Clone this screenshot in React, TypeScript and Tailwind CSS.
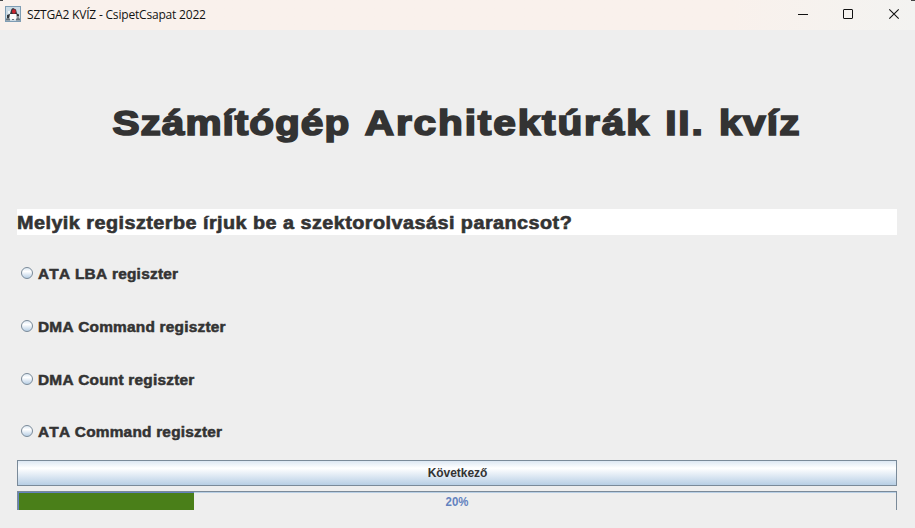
const answers = [
  { label: 'ATA LBA regiszter', height: 'h-[53px]', spacing: 'tracking-[0.23px]' },
  { label: 'DMA Command regiszter', height: 'h-[53px]', spacing: 'tracking-[0.2px]' },
  { label: 'DMA Count regiszter', height: 'h-[52px]', spacing: 'tracking-[0.2px]' },
  { label: 'ATA Command regiszter', height: 'h-[34px]', spacing: 'tracking-[0.2px]' },
];

function DukeIcon() {
  return (
    <svg width="16" height="16" viewBox="0 0 16 16">
      <rect x="0.5" y="0.5" width="15" height="15" fill="#cbdae4" stroke="#7e9db4" />
      <path d="M6.500 3L8 2l3 1.500 1 4 2 1v4h-3V9H5.500L4.500 12.500H2V9l3-1z" fill="#303438" />
      <path d="M5 8h6.500l.5 5.500H4z" fill="#fbfbfa" />
      <ellipse cx="8.900" cy="5.500" rx="1.900" ry="2.300" fill="#c9222b" />
      <path d="M1 12.500h4v2H1zM11 12.500h4v2h-4zM7 13h2v1H7z" fill="#68737b" />
      <path d="M3 5h2v2.500H3zM12.500 10h1v2h-1z" fill="#f4f5f5" />
    </svg>
  );
}

function TitleBar() {
  return (
    <header className="relative flex h-[30px] items-center bg-linear-to-r from-[#f9f1ec] from-80% to-[#f3f3f1] to-100% pl-[5px]">
      <span className="absolute left-0 top-0 h-px w-[3px] bg-[#444]" />
      <span className="absolute right-0 top-0 h-px w-[4px] bg-[#444]" />
      <div className="mt-[-2px]"><DukeIcon /></div>
      <span className="ml-[6px] whitespace-nowrap font-['Open_Sans',sans-serif] text-[12px] leading-[16px] tracking-[-0.19px] text-[#111]">
        SZTGA2 KVÍZ - CsipetCsapat 2022
      </span>
      <svg className="ml-auto" width="135" height="30" viewBox="0 0 135 30" fill="none" stroke="#111">
        <path d="M18 14.5h10" />
        <rect x="63.5" y="9.5" width="9" height="9" rx="0.5" />
        <path d="M109.3 9.3l9.4 9.4M118.7 9.3l-9.4 9.4" strokeWidth="1.1" />
      </svg>
    </header>
  );
}

function Radio() {
  return (
    <span className="size-[12px] shrink-0 rounded-full border border-[#7a8a99] bg-linear-to-b from-[#dde8f3] via-white via-35% to-[#b8cfe5]" />
  );
}

export default function App() {
  return (
    <div className="flex h-[528px] w-[915px] flex-col overflow-hidden bg-[#eeeeee] font-['Liberation_Sans',Arial,sans-serif] text-[#333] [font-kerning:none]">
      <TitleBar />
      <main className="flex flex-col pl-[17px] pr-[18px]">
        <h1 className="flex h-[179px] items-center justify-center whitespace-nowrap pt-[7px] text-[35px] font-bold leading-[42px]">
          <span className="inline-block scale-x-[1.16] tracking-[1.6px] [word-spacing:1.2px] [-webkit-text-stroke:1.7px_#333]">
            <span className="tracking-[0.85px]">Számítógép</span> Architektúrák II. <span className="tracking-[1.1px]">kvíz</span>
          </span>
        </h1>
        <h2 className="h-[26px] whitespace-nowrap bg-white text-[18px] font-bold leading-[28px] tracking-[0.42px]">
          <span className="inline-block origin-left scale-x-110 [-webkit-text-stroke:0.6px_#333]">Melyik regiszterbe írjuk be a szektorolvasási parancsot?</span>
        </h2>
        <div className="pt-[30px]">
          {answers.map((a) => (
            <div key={a.label} className={`flex items-start pl-[4px] ${a.height}`}>
              <span className="mt-[2px] flex"><Radio /></span>
              <span className={`ml-[5px] inline-block origin-left scale-x-110 whitespace-nowrap text-[14px] font-bold leading-[18px] [-webkit-text-stroke:0.5px_#333] ${a.spacing}`}>{a.label}</span>
            </div>
          ))}
        </div>
        <button className="mt-[3px] h-[26px] border border-[#7a8a99] bg-linear-to-b from-[#dde8f3] via-white via-30% to-[#b8cfe5] pl-px text-[12px] font-bold leading-[24px] tracking-[-0.05px]">
          Következő
        </button>
        <div className="relative mt-[5px] h-[19px] border border-b-0 border-[#7a8a99] text-center text-[12px] font-bold leading-[20px] text-[#6382bf]">
          <div className="absolute inset-x-0 top-0 h-px bg-[#b8cfe5]" />
          <div className="absolute left-0 top-0 h-[18px] w-[176px] border-l border-t border-[#6382bf] bg-[#4a7f19]" />
          <span className="inline-block scale-x-[0.95] pl-px">20%</span>
        </div>
      </main>
    </div>
  );
}
